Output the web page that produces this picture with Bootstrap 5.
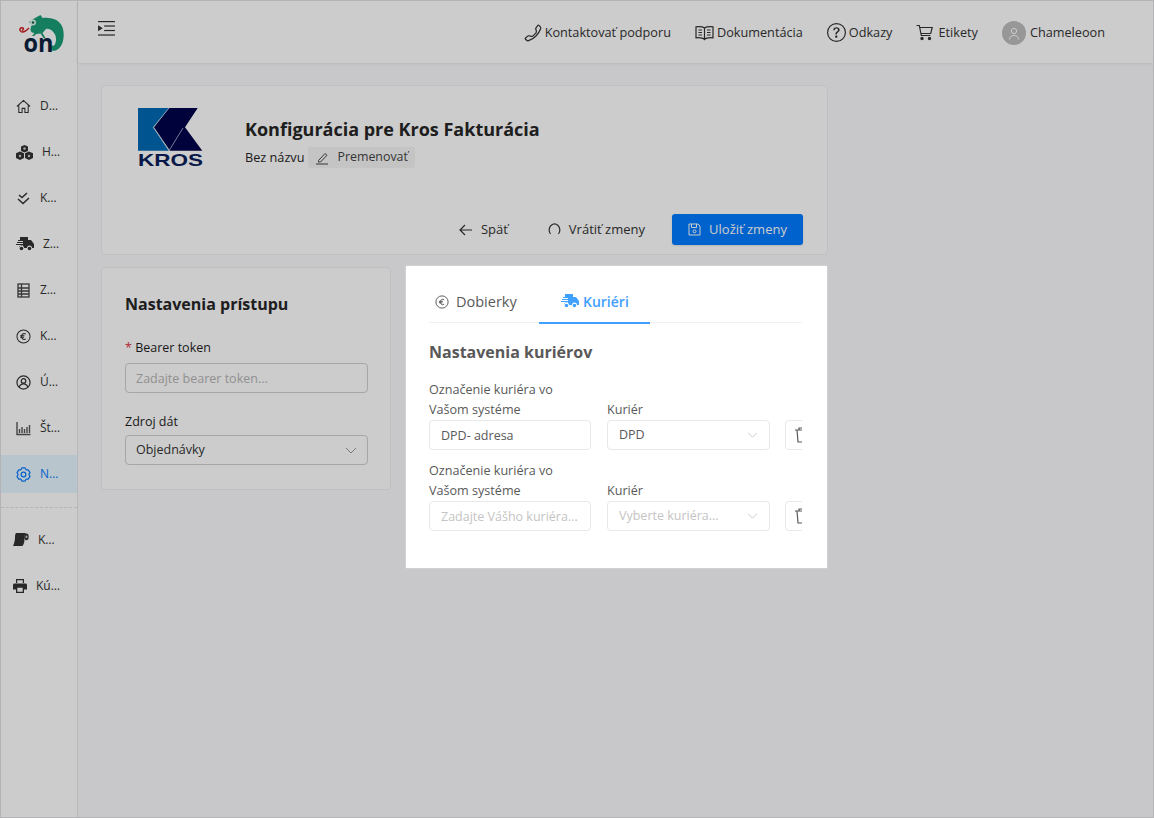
<!doctype html>
<html lang="sk">
<head>
<meta charset="utf-8">
<title>Konfigurácia pre Kros Fakturácia</title>
<link href="https://cdn.jsdelivr.net/npm/bootstrap@5.3.0/dist/css/bootstrap.min.css" rel="stylesheet">
<style>
html,body{height:100%;margin:0;overflow:hidden}
body{font-family:"Open Sans","Noto Sans",sans-serif;font-size:12.7px;color:#262626;background:#fafbfe}
.shell{height:818px;border:1px solid #b4b4b6;display:flex;position:relative;overflow:hidden}
.side{width:77px;flex:none;background:#fff;border-right:1px solid #e6e6e6}
.brand{height:86px;padding:13px 0 0 14px}
.logo-svg{overflow:visible;flex:none;display:block}
.side-item{height:38px;margin-bottom:8px;padding-left:15px;display:flex;align-items:center;gap:9px;font-size:12px;color:#333}
.side-item.tight{padding-left:12px}
.side-item.on{background:#e6f7ff;color:#0a7bff}
.side-rule{border-top:1px dashed #e3e3e3;margin:14px 0 13px}
.main{flex:1;min-width:0}
.topbar{height:62px;background:#fff;box-shadow:0 1px 3px rgba(0,0,0,.08);padding:0 48px 0 20px}
.topnav{display:flex;align-items:center;gap:24px;color:#333;padding-top:2px}
.topnav .lnk{display:flex;align-items:center;gap:3px}
.topnav .lnk.wide{gap:5px}
.topnav .lnk.flush{gap:0}
.ava{width:24px;height:24px;border-radius:50%;background:#bdbdbd;display:flex;align-items:center;justify-content:center;margin-right:4px}
.body-area{padding:22px 0 0 23px;width:750px}
.panel{background:#fff;border:1px solid #f0f0f0;border-radius:4px}
.head-panel{height:170px;padding:22px 24px 9px 36px;margin-bottom:11px}
.ttl-wrap{margin-left:41px;padding-top:9px}
.ttl{font-size:18px;font-weight:700;line-height:24px;margin:0 0 6px}
.rename{background:#f5f5f5;border-radius:3px;padding:2px 7px;margin-left:4px;display:inline-flex;align-items:center;gap:8px;color:#444;height:21px;font-size:12.4px}
.act{display:flex;align-items:center;gap:8px;color:#333;height:31px;padding:0 16px;border-radius:3px;font-size:13px}
.act.back{padding:0 10px;margin-right:22px;gap:9px}
.act.undo{padding:0 19px 0 0}
.act.pri{background:#007bff;color:#fff;width:131px;justify-content:center;box-shadow:0 1px 2px rgba(0,0,0,.1)}
.acc-panel{width:290px;height:223px;padding:24px 22px 24px 23px;flex:none;margin-top:1px}
.sub{font-size:16px;font-weight:700;line-height:22px;margin:1px 0 23px}
.lab{display:block;color:#1f1f1f;line-height:20px;margin:0 0 5px;font-size:12.5px}
.lab.second{margin:19px 0 3px}
.fake{height:30px;border:1px solid #d0d0d0;border-radius:4px;background:#fff;font-size:12.5px;padding:0 10px;width:100%;color:#333;outline:0}
.fake::placeholder{color:#b5b5b5;opacity:1}
.pick{display:flex;align-items:center;justify-content:space-between}
.tour{position:relative;z-index:1001;width:421px;height:302px;background:#fff;margin-left:15px;padding:14px 25px 0 23px;box-shadow:0 0 2px rgba(255,255,255,.5);color:#595959}
.tour-inner{overflow:hidden}
.tabrow{height:43px;display:flex;border-bottom:1px solid #f0f0f0;font-size:14.5px}
.tabx{height:43px;display:flex;align-items:center;gap:7px;margin-left:6px;width:104px}
.tabx.cur{color:#40a0ff;font-weight:600;border-bottom:2px solid #40a0ff;width:111px;padding-left:22px;margin-left:0;height:44px;gap:4px;font-size:14px}
.tour .sub{font-size:16px;margin:18px 0 17px;color:#595959}
.crow{display:flex;gap:16px;align-items:flex-end;width:400px;margin-bottom:11px}
.col-a{width:162px;flex:none}.col-b{width:163px;flex:none}
.tour .lab{color:#595959;font-size:12.6px;line-height:20px;margin:0}
.tour .fake{border-color:#e8e8e8;font-size:12.5px;padding:0 11px;color:#595959}
.tour .fake::placeholder{color:#c4c4c4}
.trash{width:30px;height:30px;flex:none;border:1px solid #e8e8e8;border-radius:4px;background:#fff;display:flex;align-items:center;padding-left:9px;margin-left:-1px}
.veil{position:absolute;inset:0;background:rgba(0,0,0,.2);z-index:1000}
.muted-ph{color:#c4c4c4}
</style>
</head>
<body>
<div class="shell">
  <aside class="side">
    <div class="brand">
      <svg class="logo-svg" width="50" height="40" viewBox="0 0 50 40"><path d="M14 8 20 4l5.500-3 2 3c8-1 19.500 1 21 13.500 1 9-2 17-8 19-3.500 1-6.500-.5-6.500-3.500 0-2 3-3 4-1 3-1 4-7 2-11.500-2-4-6-6.500-9-5.500l-3.500 4 3 5-2 0-3-4.500-4 .5-2.500 2-2 0 2.500-3c-2 0-4-1-4-3 0-2 .5-4 1.500-5Z" fill="#1b9e77"/><circle cx="18" cy="8.500" r="3" fill="#dff3ec"/><circle cx="18" cy="8.500" r="1.200" fill="#0d5c45"/><path d="M14 14c-2 2-6 5-8 3.500-2.500-2-.5-4.500 2-3.500 1 .8 0 2.500-1 2" fill="none" stroke="#d01c1f" stroke-width="1.500"/><text x="8.500" y="38" font-family="'Open Sans',sans-serif" font-weight="700" font-size="25" fill="#0c2340" textLength="30" lengthAdjust="spacingAndGlyphs">on</text></svg>
    </div>
    <div class="side-item"><svg width="15" height="15" viewBox="0 0 16 16" fill="none" stroke="#333" stroke-width="1.100"><path d="M1 8 8 1.500 15 8M3 7v7.500h3.500V10h3v4.500H13V7"/></svg><span>D…</span></div>
    <div class="side-item"><svg width="17" height="15" viewBox="0 0 17 15" fill="#333"><path d="M8.500 0 12 1.500V6L8.500 7.500 5 6V1.500Z"/><path d="M4 6.500l4 1.700V13L4 15 0 13V8.200ZM13 6.500l4 1.700V13l-4 2-4-2V8.200Z"/><circle cx="8.500" cy="3.500" r="1.200" fill="#ccc"/><circle cx="4" cy="11" r="1.200" fill="#ccc"/><circle cx="13" cy="11" r="1.200" fill="#ccc"/></svg><span>H…</span></div>
    <div class="side-item"><svg width="15" height="13" viewBox="0 0 15 13" fill="none" stroke="#333" stroke-width="1.500"><path d="M3 3 6 5.500 11 1M2 7 7 11.500 13 6"/></svg><span>K…</span></div>
    <div class="side-item"><svg width="18" height="14" viewBox="0 0 18 14" fill="#333"><path d="M4 0h8v3h3l3 4v4h-2a2.500 2.500 0 0 0-5 0H8a2.500 2.500 0 0 0-5 0V9h4V8H0V7h7V6H1V5h6V4H2V3h2Z"/><circle cx="5.500" cy="11.500" r="1.800"/><circle cx="13.500" cy="11.500" r="1.800"/></svg><span>Z…</span></div>
    <div class="side-item"><svg width="15" height="15" viewBox="0 0 15 15" fill="none" stroke="#444" stroke-width="1.300"><rect x="2" y="1" width="11" height="13"/><path d="M2 5h11M2 8h11M2 11h11M5.500 1v13"/></svg><span>Z…</span></div>
    <div class="side-item"><svg width="15" height="15" viewBox="0 0 16 16" fill="none" stroke="#333" stroke-width="1.100"><circle cx="8" cy="8" r="7"/><path d="M10.500 5.500a3 3 0 1 0 0 5M4.500 7.300h4.500M4.500 8.900h4"/></svg><span>K…</span></div>
    <div class="side-item"><svg width="15" height="15" viewBox="0 0 16 16" fill="none" stroke="#333" stroke-width="1.300"><circle cx="8" cy="8" r="7"/><circle cx="8" cy="6.300" r="2.400"/><path d="M3.400 13c.8-2.500 2.600-3.500 4.600-3.500s3.800 1 4.600 3.500"/></svg><span>Ú…</span></div>
    <div class="side-item"><svg width="15" height="15" viewBox="0 0 15 15" fill="none" stroke="#555"><path d="M1 1v12.500h13.500M3.500 12V8M6 12V6M8.500 12V8M11 12V6M13.500 12V4" stroke-width="1.400"/></svg><span>Št…</span></div>
    <div class="side-item on"><svg width="15" height="15" viewBox="0 0 16 16" fill="none" stroke="#0a7bff" stroke-width="1.300" stroke-linejoin="round"><path d="M6.300 1 9.700 1 10.700 3 13 3 14.900 6 13.700 8 14.900 10 13 13 10.700 13 9.700 15 6.300 15 5.300 13 3 13 1.100 10 2.300 8 1.100 6 3 3 5.300 3Z"/><circle cx="8" cy="8" r="2.500"/></svg><span>N…</span></div>
    <div class="side-rule"></div>
    <div class="side-item tight"><svg width="16" height="14" viewBox="0 0 16 14" fill="#333"><path d="M3 0h10c-1 1-1.500 2.500-1.500 5 0 3 0 5-2 8H0c1.500-3 2-6 2-9 0-2 .3-3 1-4Z"/><ellipse cx="13.500" cy="3.800" rx="2.200" ry="3.400"/><ellipse cx="13.500" cy="3.800" rx="1" ry="1.400" fill="#ccc"/></svg><span>K…</span></div>
    <div class="side-item tight"><svg width="14" height="14" viewBox="0 0 14 14" fill="#333"><path d="M3 0h8v4H9.800V1.300H4.200V4H3ZM1.500 4.500h11c.8 0 1.500.7 1.500 1.500v4.500h-3V14H3v-3.500H0V6c0-.8.700-1.500 1.500-1.500ZM4.300 8.800v4h5.400v-4Z"/></svg><span>Kú…</span></div>
  </aside>
  <div class="main">
    <header class="topbar d-flex align-items-center justify-content-between">
      <svg width="17" height="15" viewBox="0 0 18 16" fill="#333" class="mb-2"><rect width="18" height="1.300"/><rect x="6.500" y="4.700" width="11.500" height="1.300"/><rect x="6.500" y="9.500" width="11.500" height="1.300"/><rect y="14.300" width="18" height="1.300"/><path d="M0 4.500 5 7.700 0 11Z"/></svg>
      <nav class="topnav">
        <span class="lnk"><svg width="18" height="18" viewBox="0 0 16 16" fill="none" stroke="#333" stroke-width="1.100" transform="scale(-1,1)"><path d="M3.654 1.328a.678.678 0 0 0-1.015-.063L1.605 2.300c-.483.484-.661 1.169-.45 1.770a17.568 17.568 0 0 0 4.168 6.608 17.569 17.569 0 0 0 6.608 4.168c.601.211 1.286.033 1.770-.45l1.034-1.034a.678.678 0 0 0-.063-1.015l-2.307-1.794a.678.678 0 0 0-.58-.122l-2.190.547a1.745 1.745 0 0 1-1.657-.459L5.482 8.062a1.745 1.745 0 0 1-.46-1.657l.548-2.190a.678.678 0 0 0-.122-.58L3.654 1.328z"/></svg>Kontaktovať podporu</span>
        <span class="lnk"><svg width="19" height="16" viewBox="0 0 19 16" fill="none" stroke="#333" stroke-width="1.200"><path d="M9.500 3C8 1.700 5 1.500 1 1.800v11C5 12.500 8 12.800 9.500 14.500 11 12.800 14 12.500 18 12.800v-11C14 1.500 11 1.700 9.500 3ZM9.500 3v11.500M3.500 5h3.500M3.500 7.500h3.500M3.500 10h3.500M12 5h3.500M12 7.500h3.500M12 10h3.500"/></svg>Dokumentácia</span>
        <span class="lnk"><svg width="19" height="19" viewBox="0 0 16 16" fill="#333"><path d="M8 15A7 7 0 1 1 8 1a7 7 0 0 1 0 14zm0 1A8 8 0 1 0 8 0a8 8 0 0 0 0 16z"/><path d="M5.255 5.786a.237.237 0 0 0 .241.247h.825c.138 0 .248-.113.266-.25.09-.656.54-1.134 1.342-1.134.686 0 1.314.343 1.314 1.168 0 .635-.374.927-.965 1.371-.673.489-1.206 1.060-1.168 1.987l.003.217a.25.25 0 0 0 .25.246h.811a.25.25 0 0 0 .25-.25v-.105c0-.718.273-.927 1.010-1.486.609-.463 1.244-.977 1.244-2.056 0-1.511-1.276-2.241-2.673-2.241-1.267 0-2.655.59-2.750 2.286zm1.557 5.763c0 .533.425.927 1.010.927.609 0 1.028-.394 1.028-.927 0-.552-.42-.94-1.029-.94-.584 0-1.009.388-1.009.94z"/></svg>Odkazy</span>
        <span class="lnk wide"><svg width="17" height="17" viewBox="0 0 17 17" fill="none" stroke="#333" stroke-width="1.200"><path d="M.5 1.500h2.800l2 10h9M3.700 3.500h12.500l-1.500 6H5"/><circle cx="6" cy="14.500" r="1.100" fill="#333"/><circle cx="13.500" cy="14.500" r="1.100" fill="#333"/></svg>Etikety</span>
        <span class="lnk flush"><span class="ava"><svg width="12" height="13" viewBox="0 0 12 13" fill="none" stroke="#fff"><circle cx="6" cy="4" r="2.600"/><path d="M1.500 12.500c.3-3 2-4 4.500-4s4.200 1 4.500 4"/></svg></span>Chameleoon</span>
      </nav>
    </header>
    <div class="body-area">
      <section class="panel head-panel d-flex flex-column justify-content-between">
        <div class="d-flex">
          <svg class="logo-svg" width="66" height="59" viewBox="0 0 66 59"><path d="M0 0H31L15.300 19.300 31 42.700H0Z" fill="#0069b4"/><path d="M31 0H59.700L47 19.300 64.300 42.700H32L16 19.300Z" fill="#00034a"/><path d="M31 0 15.300 19.300 31 42.700 45 20" fill="none" stroke="#cfe0ee" stroke-width=".7"/><text x="0" y="58" font-family="'Liberation Sans',sans-serif" font-weight="700" font-size="17" fill="#0a1e5a" textLength="65" lengthAdjust="spacingAndGlyphs">KROS</text></svg>
          <div class="ttl-wrap">
            <h1 class="ttl">Konfigurácia pre Kros Fakturácia</h1>
            <div class="d-flex align-items-center">Bez názvu <span class="rename"><svg width="14" height="14" viewBox="0 0 14 14" fill="none" stroke="#444"><path d="M3.500 9.500 10 2.500l2 1.800L5.500 11H3.500ZM1 13h12"/></svg>Premenovať</span></div>
          </div>
        </div>
        <div class="d-flex justify-content-end align-items-center gap-2">
          <span class="act back"><svg width="13" height="12" viewBox="0 0 13 12" fill="none" stroke="#333" stroke-width="1.200"><path d="M13 6H1M6 1 1 6l5 5"/></svg>Späť</span>
          <span class="act undo"><svg width="13" height="13" viewBox="0 0 13 13" fill="none" stroke="#333" stroke-width="1.200"><path d="M2.500 11C.5 8.500.8 4.500 3 2.500c2.200-2 5-2 7 0 2.200 2 2.500 6 .5 8.500"/></svg>Vrátiť zmeny</span>
          <span class="act pri"><svg width="13" height="13" viewBox="0 0 13 13" fill="none" stroke="#fff"><path d="M1 1h9l2 2v9H1ZM3.500 1v3.500h5V1"/><circle cx="6.500" cy="8.300" r="1.500"/></svg>Uložiť zmeny</span>
        </div>
      </section>
      <div class="d-flex align-items-start">
        <section class="panel acc-panel">
          <h2 class="sub">Nastavenia prístupu</h2>
          <label class="lab" for="bt"><span class="text-danger">*</span> Bearer token</label>
          <input id="bt" class="fake" placeholder="Zadajte bearer token...">
          <label class="lab second">Zdroj dát</label>
          <div class="fake pick"><span>Objednávky</span><svg width="12" height="7" viewBox="0 0 12 7" fill="none" stroke="#999"><path d="M1 1l5 5 5-5"/></svg></div>
        </section>
        <section class="tour">
          <div class="tabrow">
            <div class="tabx"><svg width="14" height="14" viewBox="0 0 16 16" fill="none" stroke="#595959" stroke-width="1.100"><circle cx="8" cy="8" r="7"/><path d="M10.500 5.500a3 3 0 1 0 0 5M4.500 7.300h4.500M4.500 8.900h4"/></svg><span>Dobierky</span></div>
            <div class="tabx cur"><svg width="18" height="14" viewBox="0 0 18 14" fill="#40a0ff"><path d="M4 0h8v3h3l3 4v4h-2a2.500 2.500 0 0 0-5 0H8a2.500 2.500 0 0 0-5 0V9h4V8H0V7h7V6H1V5h6V4H2V3h2Z"/><circle cx="5.500" cy="11.500" r="1.800"/><circle cx="13.500" cy="11.500" r="1.800"/></svg><span>Kuriéri</span></div>
          </div>
          <h2 class="sub">Nastavenia kuriérov</h2>
          <div class="tour-inner">
            <div class="crow">
              <div class="col-a"><label class="lab">Označenie kuriéra vo Vašom systéme</label><input class="fake" value="DPD- adresa"></div>
              <div class="col-b"><label class="lab">Kuriér</label><div class="fake pick"><span>DPD</span><svg width="11" height="6" viewBox="0 0 12 7" fill="none" stroke="#c4c4c4"><path d="M1 1l5 5 5-5"/></svg></div></div>
              <div class="trash"><svg width="12" height="16" viewBox="0 0 12 16" fill="none" stroke="#595959" stroke-width="1.200"><path d="M0 3h12M4 3V1h4v2M2 3l1 12h7l1-12"/></svg></div>
            </div>
            <div class="crow mb-0">
              <div class="col-a"><label class="lab">Označenie kuriéra vo Vašom systéme</label><input class="fake" placeholder="Zadajte Vášho kuriéra..."></div>
              <div class="col-b"><label class="lab">Kuriér</label><div class="fake pick"><span class="muted-ph">Vyberte kuriéra...</span><svg width="11" height="6" viewBox="0 0 12 7" fill="none" stroke="#c4c4c4"><path d="M1 1l5 5 5-5"/></svg></div></div>
              <div class="trash"><svg width="12" height="16" viewBox="0 0 12 16" fill="none" stroke="#595959" stroke-width="1.200"><path d="M0 3h12M4 3V1h4v2M2 3l1 12h7l1-12"/></svg></div>
            </div>
          </div>
        </section>
      </div>
    </div>
  </div>
  <div class="veil"></div>
</div>
<script src="https://cdn.jsdelivr.net/npm/bootstrap@5.3.0/dist/js/bootstrap.bundle.min.js"></script>
</body>
</html>
